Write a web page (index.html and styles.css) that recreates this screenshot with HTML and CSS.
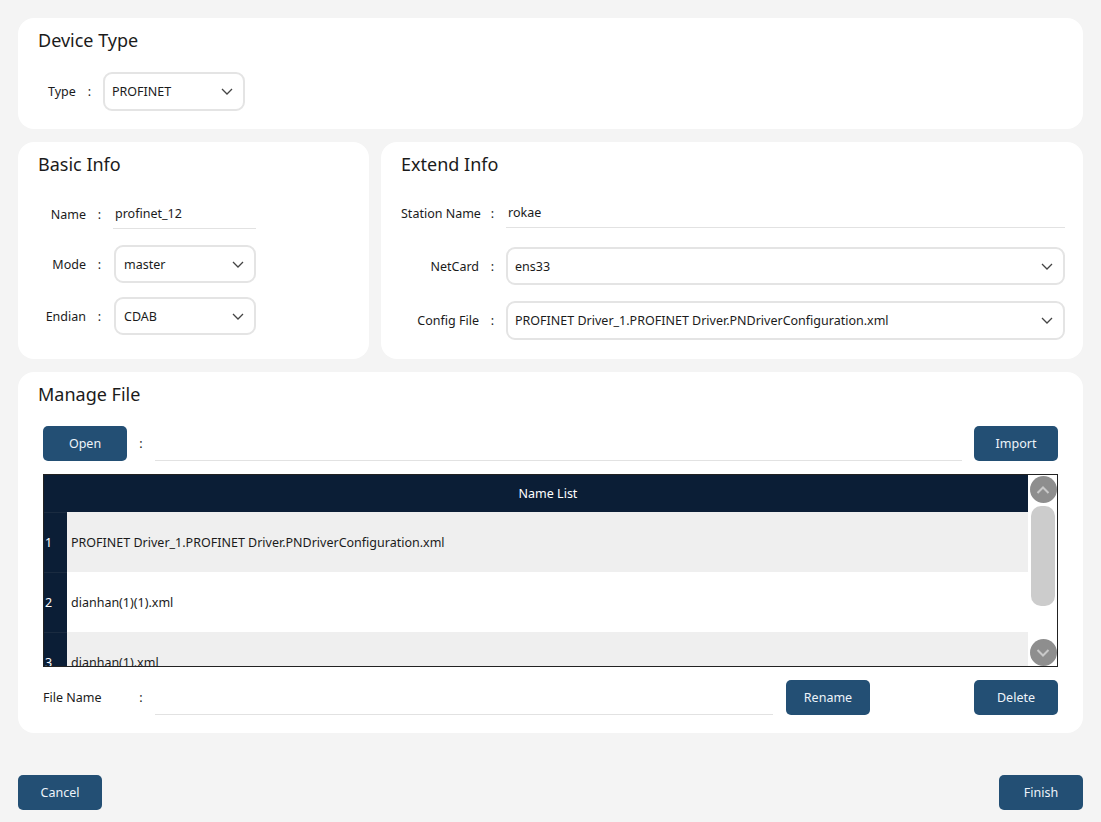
FILE: index.html
```html
<!DOCTYPE html>
<html>
<head>
<link rel="stylesheet" href="styles.css">
</head>
<body>
  <div class="page">
    <section class="card device">
      <h2 class="title">Device Type</h2>
      <div class="row type_row">
        <span class="label">Type</span><span class="colon">:</span>
        <div class="select type_select">
          <span>PROFINET</span>
          <svg class="chev" width="12" height="7" viewBox="0 0 12 7"><polyline points="1,1 6,6 11,1" fill="none" stroke="#444" stroke-width="1.3"/></svg>
        </div>
      </div>
    </section>

    <div class="info">
      <section class="card basic">
        <h2 class="title">Basic Info</h2>
        <div class="fields">
          <div class="row">
            <span class="label">Name</span><span class="colon">:</span>
            <div class="input">profinet_12</div>
          </div>
          <div class="row r_mode">
            <span class="label">Mode</span><span class="colon">:</span>
            <div class="select">
              <span>master</span>
              <svg class="chev" width="12" height="7" viewBox="0 0 12 7"><polyline points="1,1 6,6 11,1" fill="none" stroke="#444" stroke-width="1.3"/></svg>
            </div>
          </div>
          <div class="row r_endian">
            <span class="label">Endian</span><span class="colon">:</span>
            <div class="select">
              <span>CDAB</span>
              <svg class="chev" width="12" height="7" viewBox="0 0 12 7"><polyline points="1,1 6,6 11,1" fill="none" stroke="#444" stroke-width="1.3"/></svg>
            </div>
          </div>
        </div>
      </section>

      <section class="card extend">
        <h2 class="title">Extend Info</h2>
        <div class="fields">
          <div class="row">
            <span class="label">Station Name</span><span class="colon">:</span>
            <div class="input">rokae</div>
          </div>
          <div class="row r_net">
            <span class="label">NetCard</span><span class="colon">:</span>
            <div class="select">
              <span>ens33</span>
              <svg class="chev" width="12" height="7" viewBox="0 0 12 7"><polyline points="1,1 6,6 11,1" fill="none" stroke="#444" stroke-width="1.3"/></svg>
            </div>
          </div>
          <div class="row r_cfg">
            <span class="label">Config File</span><span class="colon">:</span>
            <div class="select">
              <span>PROFINET Driver_1.PROFINET Driver.PNDriverConfiguration.xml</span>
              <svg class="chev" width="12" height="7" viewBox="0 0 12 7"><polyline points="1,1 6,6 11,1" fill="none" stroke="#444" stroke-width="1.3"/></svg>
            </div>
          </div>
        </div>
      </section>
    </div>

    <section class="card manage">
      <h2 class="title">Manage File</h2>
      <div class="bar open_bar">
        <div class="btn">Open</div>
        <span class="colon">:</span>
        <div class="line"></div>
        <div class="btn">Import</div>
      </div>

      <div class="table">
        <div class="grid">
          <div class="thead">
            <div class="num"></div>
            <div class="head_cell">Name List</div>
          </div>
          <div class="trow odd">
            <div class="num">1</div>
            <div class="cell">PROFINET Driver_1.PROFINET Driver.PNDriverConfiguration.xml</div>
          </div>
          <div class="trow">
            <div class="num">2</div>
            <div class="cell">dianhan(1)(1).xml</div>
          </div>
          <div class="trow odd">
            <div class="num">3</div>
            <div class="cell">dianhan(1).xml</div>
          </div>
        </div>
        <div class="scroll">
          <div class="sbtn">
            <svg width="14" height="8" viewBox="0 0 14 8"><polyline points="1.5,7 7,1.5 12.5,7" fill="none" stroke="#c9c9c9" stroke-width="2"/></svg>
          </div>
          <div class="thumb"></div>
          <div class="sbtn">
            <svg width="14" height="8" viewBox="0 0 14 8"><polyline points="1.5,1 7,6.5 12.5,1" fill="none" stroke="#c9c9c9" stroke-width="2"/></svg>
          </div>
        </div>
      </div>

      <div class="bar file_bar">
        <span class="file_label">File Name</span>
        <span class="colon">:</span>
        <div class="line"></div>
        <div class="btn">Rename</div>
        <div class="btn delete">Delete</div>
      </div>
    </section>

    <div class="footer">
      <div class="btn">Cancel</div>
      <div class="btn">Finish</div>
    </div>
  </div>
</body>
</html>
```

FILE: styles.css
```css
html, body {
  margin: 0;
  padding: 0;
  background-color: #f4f4f4;
  color: #1b1b1b;
  font-family: "Noto Sans", "Open Sans", sans-serif;
  font-size: 12.5px;
}

.page {
  padding: 18px;
  display: flex;
  flex-direction: column;
  gap: 13px;
}

.card {
  background-color: white;
  border-radius: 16px;
  padding: 10px 18px 18px 20px;
  box-sizing: border-box;
}

.title {
  margin: 0;
  font-size: 18px;
  font-weight: normal;
  line-height: 24px;
}

.row {
  display: flex;
  align-items: center;
}

.label {
  text-align: right;
  white-space: nowrap;
}

.colon {
  width: 27px;
  text-align: center;
  flex-shrink: 0;
}

.select {
  height: 38px;
  box-sizing: border-box;
  border: 2px solid #e4e4e4;
  border-radius: 9px;
  padding: 0 10px 0 7px;
  display: flex;
  align-items: center;
  justify-content: space-between;
  flex: 1;
}

.input {
  height: 30px;
  box-sizing: border-box;
  border-bottom: 1px solid #e2e2e2;
  padding-left: 2px;
  display: flex;
  align-items: center;
  flex: 1;
}

/* device type */
.type_row {
  margin-top: 20px;
}
.type_row .label {
  width: 28px;
  margin-left: 10px;
  text-align: left;
}
.type_row .select {
  flex: 0 0 142px;
  height: 39px;
}

/* info cards */
.info {
  display: flex;
  gap: 12px;
}

.basic {
  width: 351px;
  padding-bottom: 24px;
}
.basic .fields {
  margin-top: 23px;
}
.basic .label {
  width: 48px;
}
.basic .input {
  flex: 0 0 143px;
}
.basic .select {
  flex: 0 0 142px;
  margin-left: 1px;
  padding-left: 8px;
}
.basic .r_mode {
  margin-top: 16px;
}
.basic .r_endian {
  margin-top: 14px;
}

.extend {
  flex: 1;
}
.extend .fields {
  margin-top: 22px;
}
.extend .label {
  width: 78px;
}
.extend .r_net {
  margin-top: 19px;
}
.extend .r_cfg {
  margin-top: 16px;
}
.extend .r_cfg .select {
  height: 39px;
}

/* manage file */
.manage {
  padding: 10px 25px 18px 25px;
}
.manage .title {
  margin-left: -5px;
}

.bar {
  display: flex;
  align-items: center;
  height: 35px;
}
.open_bar {
  margin-top: 20px;
}
.bar .colon {
  width: 28px;
}
.bar .line {
  flex: 1;
  height: 33px;
  border-bottom: 1px solid #e2e2e2;
  margin-right: 12px;
}
.file_bar {
  margin-top: 13px;
}
.file_bar .line {
  flex: 0 0 618px;
  margin-right: 13px;
}
.file_label {
  width: 84px;
}
.btn.delete {
  margin-left: auto;
}

.btn {
  width: 84px;
  height: 35px;
  flex-shrink: 0;
  background-color: #234f74;
  color: #eef4fa;
  border-radius: 5px;
  display: flex;
  align-items: center;
  justify-content: center;
}

.table {
  margin-top: 13px;
  height: 193px;
  box-sizing: border-box;
  border: 1px solid #222;
  display: flex;
}

.grid {
  flex: 1;
  display: flex;
  flex-direction: column;
  overflow: hidden;
}

.thead {
  height: 37px;
  flex-shrink: 0;
  display: flex;
  background-color: #0b1e36;
  color: white;
}
.head_cell {
  flex: 1;
  display: flex;
  align-items: center;
  justify-content: center;
}

.num {
  width: 23px;
  padding-left: 1px;
  flex-shrink: 0;
  background-color: #0b1e36;
  color: white;
  display: flex;
  align-items: center;
}

.trow {
  height: 60px;
  flex-shrink: 0;
  display: flex;
}
.trow .num {
  border-top: 1px solid #1a2b40;
  box-sizing: border-box;
}
.trow.odd .cell {
  background-color: #efefef;
}
.cell {
  flex: 1;
  padding-left: 4px;
  display: flex;
  align-items: center;
  background-color: white;
}

.scroll {
  width: 28px;
  margin-left: 1px;
  display: flex;
  flex-direction: column;
  align-items: center;
  background-color: white;
}
.sbtn {
  width: 27px;
  height: 27px;
  border-radius: 100%;
  background-color: #8e8e8e;
  display: flex;
  align-items: center;
  justify-content: center;
  flex-shrink: 0;
}
.sbtn:first-child {
  margin-top: 1px;
}
.thumb {
  width: 24px;
  height: 100px;
  margin-top: 3px;
  margin-bottom: auto;
  border-radius: 10px;
  background-color: #cccccc;
}

.footer {
  margin-top: 29px;
  display: flex;
  justify-content: space-between;
}
```
